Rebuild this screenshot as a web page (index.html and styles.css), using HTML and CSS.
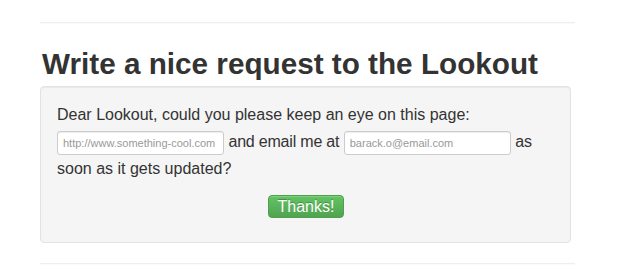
FILE: index.html
```html
<!DOCTYPE html>
<html lang="en">
<head>
    <meta charset="UTF-8">
    <meta name="viewport" content="width=device-width, initial-scale=1.0">
    <title>Lookout</title>
    <link rel="stylesheet" href="styles.css">
</head>
<body>
    <div class="container">
        <hr class="rule">
        <h2>Write a nice request to the Lookout</h2>
        <form class="well">
            <p class="request">
                Dear Lookout, could you please keep an eye on this page:
                <input type="text" class="field" placeholder="http://www.something-cool.com">
                <span class="mid">and email me at</span>
                <input type="text" class="field" placeholder="barack.o@email.com">
                as soon as it gets updated?
            </p>
            <div class="actions">
                <button type="submit" class="btn-success">Thanks!</button>
            </div>
        </form>
        <hr class="rule bottom">
    </div>
</body>
</html>
```

FILE: styles.css
```css
body {
    margin: 0;
    font-family: "Liberation Sans", Arial, sans-serif;
    color: #333;
    background-color: #fff;
}
.container {
    width: 535px;
    margin-left: 40px;
}
.rule {
    margin: 22px 0 0 0;
    border: 0;
    border-top: 1px solid #eee;
    border-bottom: 1px solid #fafafa;
}
.rule.bottom {
    margin-top: 20px;
}
h2 {
    margin: 20px 0 2px 2px;
    font-size: 29.7px;
    line-height: 40px;
    font-weight: bold;
    color: #333;
}
.well {
    width: 498px;
    padding: 14px 15px 24px 16px;
    background-color: #f5f5f5;
    border: 1px solid #e3e3e3;
    border-radius: 4px;
    box-shadow: inset 0 1px 1px rgba(0, 0, 0, 0.05);
}
.request {
    margin: 0;
    font-size: 16px;
    line-height: 27px;
}
.mid {
    letter-spacing: -0.2px;
}
.field {
    width: 155px;
    height: 14px;
    padding: 4px 5px;
    font-family: "Liberation Sans", Arial, sans-serif;
    font-size: 11px;
    color: #555;
    border: 1px solid #ccc;
    border-radius: 3px;
    background-color: #fff;
    box-shadow: inset 0 1px 1px rgba(0, 0, 0, 0.075);
    vertical-align: baseline;
}
.field::placeholder {
    color: #999;
}
.actions {
    margin-top: 13px;
    text-align: center;
}
.btn-success {
    width: 76px;
    height: 23px;
    padding: 0;
    font-family: "Liberation Sans", Arial, sans-serif;
    font-size: 16px;
    line-height: 21px;
    color: #fff;
    text-shadow: 0 -1px 0 rgba(0, 0, 0, 0.25);
    background-color: #5bb75b;
    background-image: linear-gradient(to bottom, #62c462, #51a351);
    border: 1px solid #4f9f4f;
    border-radius: 4px;
    box-shadow: inset 0 1px 0 rgba(255, 255, 255, 0.2);
    cursor: pointer;
}
```
